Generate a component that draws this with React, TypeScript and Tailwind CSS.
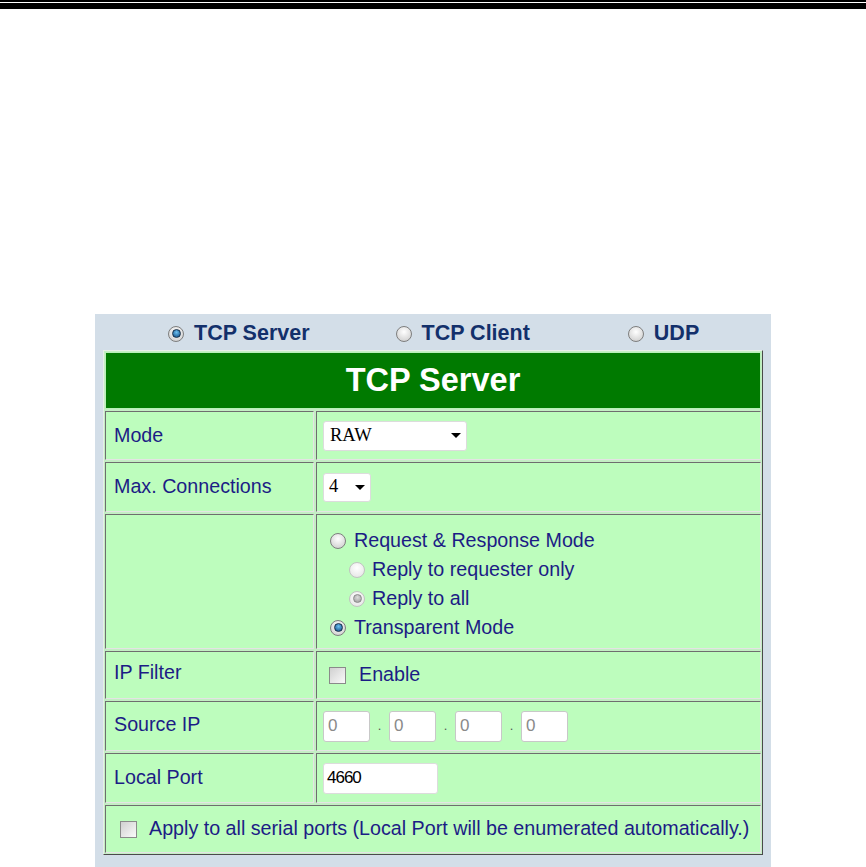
import React from "react";

const font = { fontFamily: '"Liberation Sans", Arial, sans-serif' };

function Radio({ checked = false, disabled = false }: { checked?: boolean; disabled?: boolean }) {
  return (
    <span
      className={
        "inline-flex items-center justify-center w-[16px] h-[16px] rounded-full border shrink-0 " +
        (disabled
          ? "border-[#c2c2c2] bg-[radial-gradient(circle_at_50%_35%,#ffffff,#e2e2e2)]"
          : "border-[#7e7e7e] bg-[radial-gradient(circle_at_50%_35%,#ffffff,#c8c8c8)]")
      }
    >
      {checked && (
        <span
          className={
            "w-[9px] h-[9px] rounded-full border " +
            (disabled
              ? "border-[#8a8a8a] bg-[radial-gradient(circle_at_50%_35%,#dcdcdc,#989898)]"
              : "border-[#17304a] bg-[radial-gradient(circle_at_50%_35%,#6cc0f0,#0a4680)]")
          }
        />
      )}
    </span>
  );
}

function Checkbox() {
  return (
    <span className="inline-block w-[17px] h-[17px] border border-[#8a8a8a] bg-[linear-gradient(135deg,#d0d0d0,#fafafa)] shrink-0" />
  );
}

function Arrow() {
  return <span className="w-0 h-0 border-l-[5px] border-r-[5px] border-t-[5px] border-l-transparent border-r-transparent border-t-black" />;
}

function Cell({ children, className = "" }: { children?: React.ReactNode; className?: string }) {
  return (
    <div
      className={
        "bg-[#bdfdbd] border-t border-l border-t-[#6e6e6e] border-l-[#6e6e6e] border-b border-r border-b-[#e4e4e4] border-r-[#e4e4e4] " +
        className
      }
    >
      {children}
    </div>
  );
}

export default function App() {
  return (
    <div className="w-[866px] h-[867px] bg-white overflow-hidden" style={font}>
      {/* top rules */}
      <div className="h-[2px] bg-black" />
      <div className="h-[1px] bg-white" />
      <div className="h-[6px] bg-black" />

      <div className="mt-[305px] ml-[95px] w-[676px] h-[560px] bg-[#d3dee8] pt-[3px]">
        {/* mode radios */}
        <div className="h-[33px] flex items-center text-[21.5px] font-bold text-[#13306b]">
          <div className="flex items-center gap-[10px] ml-[73px]">
            <Radio checked />
            <span>TCP Server</span>
          </div>
          <div className="flex items-center gap-[10px] ml-[86px]">
            <Radio />
            <span>TCP Client</span>
          </div>
          <div className="flex items-center gap-[10px] ml-[98px]">
            <Radio />
            <span>UDP</span>
          </div>
        </div>

        {/* settings table */}
        <div className="ml-[8px] w-[660px] border border-t-[#e8eee8] border-l-[#e8eee8] border-b-[#4a4a4a] border-r-[#4a4a4a] bg-[#c4eec4] p-[1px] flex flex-col gap-[2px] text-[19.7px] text-[#1c1c85]">
          <div className="h-[57px] bg-[#007a00] border border-[#b8f0b8] flex items-center justify-center text-white font-bold text-[32.5px]">
            TCP Server
          </div>

          <div className="grid grid-cols-[209px_1fr] gap-[2px]">
            <Cell className="h-[49px] flex items-center pl-[8px]">Mode</Cell>
            <Cell className="h-[49px] flex items-center pl-[6px]">
              <div className="w-[144px] h-[30px] bg-white rounded-[3px] border border-[#dcdcdc] flex items-center justify-between pl-[6px] pr-[5px] text-black text-[18.5px]" style={{ fontFamily: '"Liberation Serif", serif' }}>
                <span>RAW</span>
                <Arrow />
              </div>
            </Cell>

            <Cell className="h-[50px] flex items-center pl-[8px]">Max. Connections</Cell>
            <Cell className="h-[50px] flex items-center pl-[6px]">
              <div className="w-[48px] h-[29px] bg-white rounded-[3px] border border-[#dcdcdc] flex items-center justify-between pl-[5px] pr-[5px] text-black text-[18.5px]" style={{ fontFamily: '"Liberation Serif", serif' }}>
                <span>4</span>
                <Arrow />
              </div>
            </Cell>

            <Cell className="h-[135px]" />
            <Cell className="h-[135px] pl-[13px] pt-[11px] flex flex-col">
              <div className="h-[29px] flex items-center gap-[8px]">
                <Radio />
                <span>Request &amp; Response Mode</span>
              </div>
              <div className="h-[29px] flex items-center gap-[7px] pl-[19px]">
                <Radio disabled />
                <span>Reply to requester only</span>
              </div>
              <div className="h-[29px] flex items-center gap-[7px] pl-[19px]">
                <Radio checked disabled />
                <span>Reply to all</span>
              </div>
              <div className="h-[29px] flex items-center gap-[8px]">
                <Radio checked />
                <span>Transparent Mode</span>
              </div>
            </Cell>

            <Cell className="h-[48px] flex items-center pl-[8px] pb-[4px]">IP Filter</Cell>
            <Cell className="h-[48px] flex items-center pl-[12px] gap-[13px]">
              <Checkbox />
              <span>Enable</span>
            </Cell>

            <Cell className="h-[50px] flex items-center pl-[8px] pb-[2px]">Source IP</Cell>
            <Cell className="h-[50px] flex items-center pl-[6px]">
              {[0, 1, 2, 3].map((i) => (
                <React.Fragment key={i}>
                  {i > 0 && <span className="w-[19px] text-center text-[#555] text-[13px]">.</span>}
                  <div className="w-[47px] h-[31px] bg-white rounded-[3px] border border-[#c8c8c8] flex items-center pl-[4px] text-[#8a8a8a] text-[17px]">
                    0
                  </div>
                </React.Fragment>
              ))}
            </Cell>

            <Cell className="h-[50px] flex items-center pl-[8px]">Local Port</Cell>
            <Cell className="h-[50px] flex items-center pl-[6px]">
              <div className="w-[115px] h-[31px] bg-white rounded-[3px] border border-[#dcdcdc] flex items-center pl-[3px] text-black text-[17px] tracking-[-1px]">
                4660
              </div>
            </Cell>
          </div>

          <Cell className="h-[48px] flex items-center pl-[14px] gap-[12px]">
            <Checkbox />
            <span>Apply to all serial ports (Local Port will be enumerated automatically.)</span>
          </Cell>
        </div>
      </div>
    </div>
  );
}
